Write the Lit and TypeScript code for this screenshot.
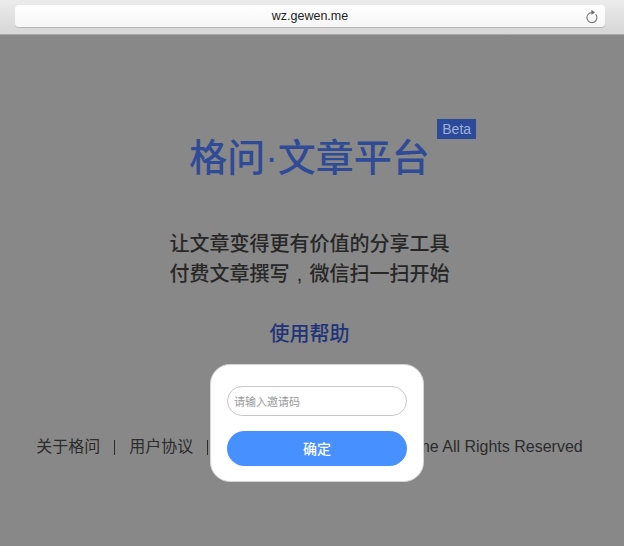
import { LitElement, html, css } from "lit";
import { customElement } from "lit/decorators.js";

@customElement("app-root")
export class AppRoot extends LitElement {
  static styles = css`
    :host {
      display: block;
      position: relative;
      width: 624px;
      height: 546px;
      overflow: hidden;
      background: #888;
      font-family: "Liberation Sans", "Noto Sans CJK SC", sans-serif;
    }
    .chrome {
      box-sizing: border-box;
      height: 35px;
      padding: 5px 19px 0 15px;
      background: linear-gradient(#ececec, #d6d6d6);
      border-bottom: 1px solid #a9a9a9;
    }
    .url {
      position: relative;
      height: 22px;
      border-radius: 4px;
      background: linear-gradient(#ffffff, #f6f6f6);
      box-shadow: 0 1px 0 #b5b5b5;
      display: flex;
      align-items: center;
      justify-content: center;
      font-size: 12.5px;
      color: #222;
    }
    .reload {
      position: absolute;
      right: 6px;
      top: 4px;
      width: 14px;
      height: 16px;
    }
    .page {
      box-sizing: border-box;
      position: relative;
      height: 511px;
      padding-right: 5px;
      display: flex;
      flex-direction: column;
      align-items: center;
    }
    .brand {
      position: relative;
      margin-top: 95px;
      font-size: 38px;
      font-weight: 500;
      line-height: 56px;
      color: #2f4b96;
      white-space: nowrap;
    }
    .beta {
      position: absolute;
      left: 248px;
      top: -11px;
      width: 39px;
      height: 20px;
      background: #2b4a9a;
      color: #9fb0d8;
      font-size: 14px;
      font-weight: 400;
      line-height: 20px;
      text-align: center;
    }
    .tag {
      margin-top: 43px;
      font-size: 20px;
      font-weight: 500;
      line-height: 30px;
      color: #272727;
      text-align: center;
    }
    .comma {
      display: inline-block;
      width: 20px;
      text-align: center;
    }
    .help {
      margin-top: 31px;
      font-size: 20px;
      font-weight: 500;
      line-height: 28px;
      color: #1f3478;
    }
    .foot {
      margin-top: 87px;
      display: flex;
      align-items: center;
      gap: 14px;
      font-size: 16px;
      line-height: 24px;
      color: #2c2c2c;
      white-space: nowrap;
    }
    .sep {
      width: 1px;
      height: 15px;
      background: #2c2c2c;
    }
    .modal {
      position: absolute;
      left: 210px;
      top: 364px;
      box-sizing: border-box;
      width: 214px;
      height: 118px;
      padding: 21px 16px 0;
      background: #fff;
      border: 1px solid #d4d4d4;
      border-radius: 20px;
      display: flex;
      flex-direction: column;
      gap: 15px;
    }
    .field {
      box-sizing: border-box;
      height: 30px;
      border: 1px solid #c8c8c8;
      border-radius: 15px;
      padding-left: 6px;
      font-size: 11px;
      line-height: 30px;
      color: #999;
    }
    .ok {
      height: 35px;
      border-radius: 18px;
      background: #4691ff;
      color: #fff;
      font-size: 14px;
      font-weight: 500;
      line-height: 37px;
      text-align: center;
    }
  `;

  render() {
    return html`
      <div class="chrome">
        <div class="url">
          wz.gewen.me
          <svg class="reload" viewBox="0 0 14 16" fill="none">
            <path d="M10.6 5.2A5 5 0 1 1 6.6 3.6" stroke="#7a7a7a" stroke-width="1.1" />
            <path d="M6.4 0.8 10 3.4 6.4 5.8Z" fill="#6a6a6a" />
          </svg>
        </div>
      </div>
      <div class="page">
        <div class="brand">格问·文章平台<span class="beta">Beta</span></div>
        <div class="tag">让文章变得更有价值的分享工具<br />付费文章撰写<span class="comma">,</span>微信扫一扫开始</div>
        <div class="help">使用帮助</div>
        <div class="foot">
          <span>关于格问</span><span class="sep"></span>
          <span>用户协议</span><span class="sep"></span>
          <span>Copyright © 2016 · Gewen.me All Rights Reserved</span>
        </div>
      </div>
      <div class="modal">
        <div class="field">请输入邀请码</div>
        <div class="ok">确定</div>
      </div>
    `;
  }
}
